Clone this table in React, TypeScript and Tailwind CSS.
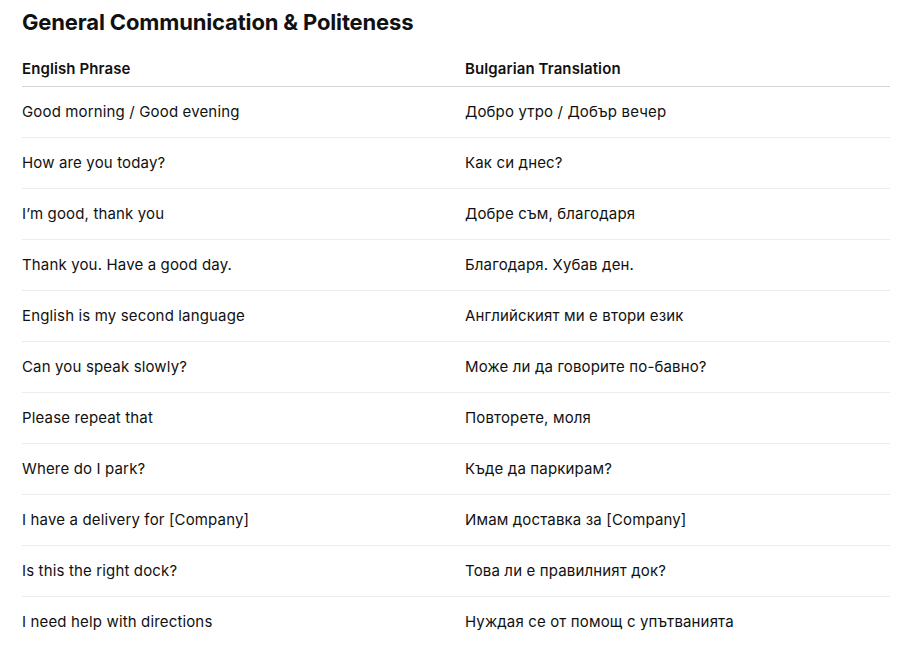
import React from "react";

const rows: [string, string][] = [
  ["Good morning / Good evening", "Добро утро / Добър вечер"],
  ["How are you today?", "Как си днес?"],
  ["I’m good, thank you", "Добре съм, благодаря"],
  ["Thank you. Have a good day.", "Благодаря. Хубав ден."],
  ["English is my second language", "Английският ми е втори език"],
  ["Can you speak slowly?", "Може ли да говорите по-бавно?"],
  ["Please repeat that", "Повторете, моля"],
  ["Where do I park?", "Къде да паркирам?"],
  ["I have a delivery for [Company]", "Имам доставка за [Company]"],
  ["Is this the right dock?", "Това ли е правилният док?"],
  ["I need help with directions", "Нуждая се от помощ с упътванията"],
];

export default function App() {
  return (
    <div
      className="w-[900px] h-[667px] bg-white text-[#111] overflow-hidden pl-[22px] pr-[10px]"
      style={{ fontFamily: "Inter, 'Noto Sans', sans-serif" }}
    >
      <h1 className="text-[22px] leading-[28px] font-bold tracking-[-0.15px] pt-[8px] h-[50px]">
        General Communication &amp; Politeness
      </h1>
      <div className="grid grid-cols-[443px_1fr] border-b border-[#d4d4d4] h-[37px] items-start text-[15px] font-semibold leading-[20px] pt-[9px] tracking-[0.1px]">
        <div>English Phrase</div>
        <div>Bulgarian Translation</div>
      </div>
      {rows.map(([en, bg], i) => (
        <div
          key={i}
          className={
            "grid grid-cols-[443px_1fr] items-center text-[15px] leading-[20px] tracking-[0.15px] " +
            (i < rows.length - 1 ? "h-[51px] border-b border-[#ececec]" : "h-[49px]")
          }
        >
          <div>{en}</div>
          <div>{bg}</div>
        </div>
      ))}
    </div>
  );
}
